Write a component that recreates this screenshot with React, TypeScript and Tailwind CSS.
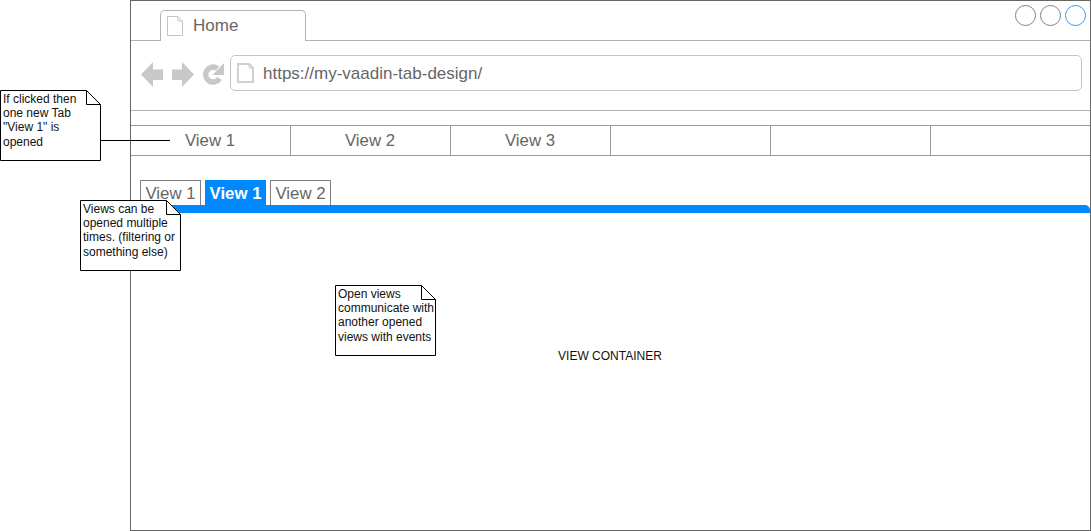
const sans = "font-['Liberation_Sans',Arial,sans-serif]";

function PageIcon({ w, h, stroke, sw = 1 }: { w: number; h: number; stroke: string; sw?: number }) {
  const i = sw / 2;
  const f = 5;
  const d = `M${i} ${i}H${w - f}L${w - i} ${f}V${h - i}H${i}Z`;
  return (
    <svg width={w} height={h} viewBox={`0 0 ${w} ${h}`} fill="none" className="shrink-0">
      <path d={d} stroke={stroke} strokeWidth={sw} fill="#fff" />
      <path d={`M${w - f} ${i}V${f}H${w - i}`} stroke={stroke} strokeWidth="1" />
    </svg>
  );
}

function Note({ lines, className }: { lines: string[]; className: string }) {
  return (
    <div className={`absolute w-[101px] h-[71px] text-[12px] leading-[14.4px] text-[#111] ${className}`}>
      <svg width="101" height="71" viewBox="0 0 101 71" className="absolute inset-0">
        <path d="M.5.5H86.5L100.5 14.5V70.5H.5Z" fill="#fff" stroke="#000" />
        <path d="M86.5.5V14.5H100.5" fill="none" stroke="#000" />
      </svg>
      <div className="relative pl-[3px] pt-[1.5px] whitespace-nowrap">
        {lines.map((l) => (
          <div key={l}>{l}</div>
        ))}
      </div>
    </div>
  );
}

function NavCell({ label, last }: { label?: string; last?: boolean }) {
  return (
    <div
      className={`flex items-center justify-center pr-px text-[16.8px] text-[#666] ${
        last ? "flex-1" : "w-40 shrink-0 border-r border-[#999]"
      }`}
    >
      {label}
    </div>
  );
}

function OpenTab({ label, active }: { label: string; active?: boolean }) {
  return (
    <div
      className={`w-[61px] h-[25px] pt-[2px] flex items-center justify-center text-[16.8px] border border-b-0 ${
        active ? "bg-[#0088ff] border-[#0088ff] text-white font-bold" : "bg-white text-[#666] border-[#808080]"
      }`}
    >
      {label}
    </div>
  );
}

export default function App() {
  return (
    <div className={`relative w-[1091px] h-[531px] bg-white overflow-hidden ${sans}`}>
      <div className="ml-[130px] w-[961px] h-[531px] border border-[#666] flex flex-col">
        {/* tab strip */}
        <div className="h-10 shrink-0 relative border-b border-[#b3b3b3] flex items-end pl-[29px]">
          <div className="w-[146px] h-[31px] -mb-px bg-white border border-b-0 border-[#b3b3b3] rounded-t-[5px] flex items-center pl-[6px] gap-[10px] text-[17px] text-[#666]">
            <PageIcon w={16} h={20} stroke="#c4c4c4" />
            <span>Home</span>
          </div>
          <div className="absolute right-[4px] top-[4px] flex gap-[4px]">
            <div className="w-[21px] h-[21px] rounded-full border border-[#808080]" />
            <div className="w-[21px] h-[21px] rounded-full border border-[#808080]" />
            <div className="w-[21px] h-[21px] rounded-full border border-[#2f9bff]" />
          </div>
        </div>
        {/* address bar */}
        <div className="h-[70px] shrink-0 border-b border-[#b3b3b3] flex items-center pl-[10px] pr-[8px] pb-[5px]">
          <svg width="88" height="27" viewBox="0 0 88 27" className="shrink-0 mt-[3px]">
            <path d="M0 13.5 12 1V8.5H22V19H12V26Z" fill="#c8c8c8" />
            <path d="M53 13.5 41 1V8.5H31V19H41V26Z" fill="#c8c8c8" />
            <path d="M78.5 17.5A7.5 7.5 0 1 1 76.5 7.5" fill="none" stroke="#c8c8c8" strokeWidth="5.5" />
            <path d="M83 2V14H71.5Z" fill="#c8c8c8" />
          </svg>
          <div className="flex-1 h-9 ml-[1px] rounded-[5px] border border-[#c4c4c4] flex items-center pl-[6px] gap-[9px] text-[17px] text-[#666]">
            <PageIcon w={17} h={20} stroke="#d0d0d0" sw={2} />
            <span className="pt-[2px]">https://my-vaadin-tab-design/</span>
          </div>
        </div>
        <div className="h-[14px] shrink-0" />
        {/* view nav */}
        <div className="h-[31px] shrink-0 border-y border-[#999] flex">
          <NavCell label="View 1" />
          <NavCell label="View 2" />
          <NavCell label="View 3" />
          <NavCell />
          <NavCell />
          <NavCell last />
        </div>
        {/* open tabs */}
        <div className="flex gap-1 pl-[9px] pt-[24px]">
          <OpenTab label="View 1" />
          <OpenTab label="View 1" active />
          <OpenTab label="View 2" />
        </div>
        <div className="h-2 ml-[9px] bg-[#0088ff] rounded-tr-[5px] shrink-0" />
        <div className="flex-1 pt-[136px] pr-[1px] text-center text-[12px] leading-[14px] text-[#111]">
          VIEW CONTAINER
        </div>
      </div>

      <div className="absolute left-[100px] top-[140px] w-[70px] h-px bg-black" />
      <Note className="left-0 top-[90px]" lines={["If clicked then", "one new Tab", '"View 1" is', "opened"]} />
      <Note className="left-[80px] top-[200px]" lines={["Views can be", "opened multiple", "times. (filtering or", "something else)"]} />
      <Note className="left-[335px] top-[285px]" lines={["Open views", "communicate with", "another opened", "views with events"]} />
    </div>
  );
}
